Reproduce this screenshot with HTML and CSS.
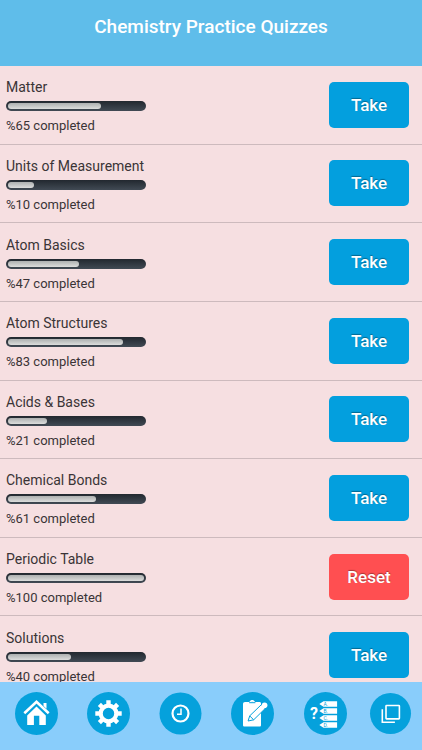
FILE: index.html
```html
<!DOCTYPE html>
<html lang="en">
<head>
  <meta charset="UTF-8" />
  <meta name="viewport" content="width=device-width, initial-scale=1.0" />
  <title>Chemistry Practice Quizzes</title>
  <link rel="stylesheet" href="styles.css">
</head>
<body>
  <header class="top-bar">
    <h1>Chemistry Practice Quizzes</h1>
  </header>

  <main class="content">
    <ul class="quiz-list">
      <li class="quiz">
        <div class="quiz-info">
          <h2 id="quiz1">Matter</h2>
          <div class="bar" role="progressbar" aria-labelledby="quiz1" aria-valuenow="65"><div class="bar-fill" style="--done: 65"></div></div>
          <p>%65 completed</p>
        </div>
        <button class="btn" type="button">Take</button>
      </li>
      <li class="quiz">
        <div class="quiz-info">
          <h2 id="quiz2">Units of Measurement</h2>
          <div class="bar" role="progressbar" aria-labelledby="quiz2" aria-valuenow="10"><div class="bar-fill" style="--done: 10"></div></div>
          <p>%10 completed</p>
        </div>
        <button class="btn" type="button">Take</button>
      </li>
      <li class="quiz">
        <div class="quiz-info">
          <h2 id="quiz3">Atom Basics</h2>
          <div class="bar" role="progressbar" aria-labelledby="quiz3" aria-valuenow="47"><div class="bar-fill" style="--done: 47"></div></div>
          <p>%47 completed</p>
        </div>
        <button class="btn" type="button">Take</button>
      </li>
      <li class="quiz">
        <div class="quiz-info">
          <h2 id="quiz4">Atom Structures</h2>
          <div class="bar" role="progressbar" aria-labelledby="quiz4" aria-valuenow="83"><div class="bar-fill" style="--done: 83"></div></div>
          <p>%83 completed</p>
        </div>
        <button class="btn" type="button">Take</button>
      </li>
      <li class="quiz">
        <div class="quiz-info">
          <h2 id="quiz5">Acids &amp; Bases</h2>
          <div class="bar" role="progressbar" aria-labelledby="quiz5" aria-valuenow="21"><div class="bar-fill" style="--done: 21"></div></div>
          <p>%21 completed</p>
        </div>
        <button class="btn" type="button">Take</button>
      </li>
      <li class="quiz">
        <div class="quiz-info">
          <h2 id="quiz6">Chemical Bonds</h2>
          <div class="bar" role="progressbar" aria-labelledby="quiz6" aria-valuenow="61"><div class="bar-fill" style="--done: 61"></div></div>
          <p>%61 completed</p>
        </div>
        <button class="btn" type="button">Take</button>
      </li>
      <li class="quiz">
        <div class="quiz-info">
          <h2 id="quiz7">Periodic Table</h2>
          <div class="bar" role="progressbar" aria-labelledby="quiz7" aria-valuenow="100"><div class="bar-fill" style="--done: 100"></div></div>
          <p>%100 completed</p>
        </div>
        <button class="btn btn-reset" type="button">Reset</button>
      </li>
      <li class="quiz">
        <div class="quiz-info">
          <h2 id="quiz8">Solutions</h2>
          <div class="bar" role="progressbar" aria-labelledby="quiz8" aria-valuenow="40"><div class="bar-fill" style="--done: 40"></div></div>
          <p>%40 completed</p>
        </div>
        <button class="btn" type="button">Take</button>
      </li>
    </ul>
  </main>

  <nav class="tab-bar">
    <a href="#home" aria-label="Home">
      <svg viewBox="0 0 43 43">
        <circle cx="21.5" cy="21.5" r="21.5" />
        <path class="line" stroke-width="2.6" d="M9.3 21.3 21.5 9.8l12.2 11.5" />
        <path class="solid" d="M12.2 23.4 21.5 14.6l9.3 8.8V33h-6.5v-9.2h-5.4V33h-6.7zM28.5 11h3v5.8l-3-2.8z" />
      </svg>
    </a>
    <a href="#settings" aria-label="Settings">
      <svg viewBox="0 0 43 43">
        <circle cx="21.5" cy="21.5" r="21.5" />
        <circle class="line" cx="21.5" cy="21.5" r="7.8" stroke-width="4.2" />
        <g class="line" stroke-width="4.4">
          <path d="M21.5 8.3v4.5M21.5 30.2v4.5M8.3 21.5h4.5M30.2 21.5h4.5" />
          <path d="m12.4 12.4 3.1 3.1M27.5 27.5l3.1 3.1M12.4 30.6l3.1-3.1M27.5 15.5l3.1-3.1" />
        </g>
      </svg>
    </a>
    <a href="#history" aria-label="History">
      <svg viewBox="0 0 43 43">
        <circle cx="21.5" cy="21.5" r="21" />
        <circle class="line" cx="21.5" cy="21.5" r="8" stroke-width="2.2" />
        <path class="line" stroke-width="1.5" d="M22 16.5v5.7h-4" />
      </svg>
    </a>
    <a href="#quizzes" aria-label="Quizzes">
      <svg viewBox="0 0 43 43">
        <circle cx="21.5" cy="21.5" r="21.5" />
        <path class="solid" d="M14 10h4.3l1-1.2c.4-1 3.4-1 3.8 0l1 1.2h4.4c1 0 1.5.6 1.5 1.6v21.3c0 1-.5 1.6-1.5 1.6H13.6c-1 0-1.6-.6-1.6-1.6V12c0-1.2.8-2 2-2z" />
        <path class="cut" d="M18.2 10.7h6.2M21.2 9.3v.2" />
        <path class="solid cut" d="m18.7 23.9 11.6-11.2 3.9 3.8-11.5 11.3-5.6 1.2zM18.7 23.9l4 3.9" />
        <circle class="solid" cx="33.6" cy="13.2" r="2.8" />
      </svg>
    </a>
    <a href="#answers" aria-label="Answers">
      <svg viewBox="0 0 43 43">
        <circle cx="21.5" cy="21.5" r="21.5" />
        <text class="question" x="6" y="27">?</text>
        <path class="solid" d="m15.3 12 4.2-2.8h13.6v5.6H19.5zM15.3 19l4.2-2.8h13.6v5.6H19.5zM15.3 26l4.2-2.8h13.6v5.6H19.5zM15.3 33l4.2-2.8h13.6v5.6H19.5z" />
        <g class="letters">
          <text x="19.5" y="14">A.</text>
          <text x="19.5" y="21">B.</text>
          <text x="19.5" y="28">C.</text>
          <text x="19.5" y="35">D.</text>
        </g>
      </svg>
    </a>
    <a href="#cards" aria-label="Cards">
      <svg viewBox="0 0 43 43">
        <circle cx="21.5" cy="21.5" r="20.5" />
        <rect class="line" x="17" y="13.5" width="13.4" height="13.4" rx="0.6" stroke-width="1.6" />
        <path class="line" stroke-width="1.6" d="M13.3 17.2v13h12.6" />
      </svg>
    </a>
  </nav>
</body>
</html>
```
FILE: styles.css
```css
* {
  box-sizing: border-box;
}

body {
  margin: 0;
  height: 100vh;
  display: flex;
  flex-direction: column;
  font-family: Roboto, "Liberation Sans", sans-serif;
  background: #f6dfe1;
  color: #3a3436;
}

h1, h2, p {
  margin: 0;
}

.top-bar {
  flex: none;
  padding: 16px 16px 28px;
  background: #5fbdea;
  color: white;
  text-align: center;
}

.top-bar h1 {
  font-size: 19px;
  line-height: 22px;
  font-weight: 500;
}

.content {
  flex: 1;
  min-height: 0;
  overflow-y: auto;
  scrollbar-width: none;
}

.quiz-list {
  list-style: none;
  margin: 0;
  padding: 0;
  min-height: 629px;
  display: grid;
  grid-auto-rows: 1fr;
}

.quiz {
  display: flex;
  align-items: center;
  justify-content: space-between;
  padding: 0 13px 0 6px;
  border-bottom: 1px solid #cdbabd;
}

.quiz-info {
  padding-top: 4px;
}

.quiz-info h2 {
  font-size: 14px;
  line-height: 18px;
  font-weight: 400;
}

.quiz-info p {
  font-size: 13px;
  line-height: 18px;
}

.bar {
  width: 140px;
  height: 10px;
  margin: 5px 0 6px;
  padding: 2px;
  border-radius: 5px;
  background: linear-gradient(#22282f, #414a54);
}

/* fill starts at 10% so that the rounded ends always show */
.bar-fill {
  width: calc(10% + var(--done) * 0.9%);
  height: 100%;
  border-radius: 3px;
  background: linear-gradient(#adb0b0, #dcdddc);
}

.btn {
  width: 80px;
  height: 46px;
  padding: 0;
  border: 0;
  border-radius: 5px;
  background: #039fde;
  color: white;
  font-family: inherit;
  font-size: 17px;
  font-weight: 500;
  text-shadow: 0 -1px 1px rgba(0, 0, 0, 0.35);
  cursor: pointer;
}

.btn-reset {
  background: #ff4f51;
}

.tab-bar {
  flex: none;
  display: grid;
  grid-template-columns: repeat(5, 5fr) 4fr;
  justify-items: center;
  padding: 10px 3px 15px 0;
  background: #89cdfb;
}

.tab-bar a,
.tab-bar svg {
  display: block;
  width: 43px;
  height: 43px;
}

.tab-bar svg {
  fill: #05a1dc;
}

.tab-bar .line {
  fill: none;
  stroke: white;
}

.tab-bar .solid {
  fill: white;
}

.tab-bar .cut {
  stroke: #05a1dc;
  stroke-width: 1;
}

.question {
  fill: white;
  font-size: 16px;
  font-weight: 700;
}

.letters {
  font-size: 5px;
}
```
